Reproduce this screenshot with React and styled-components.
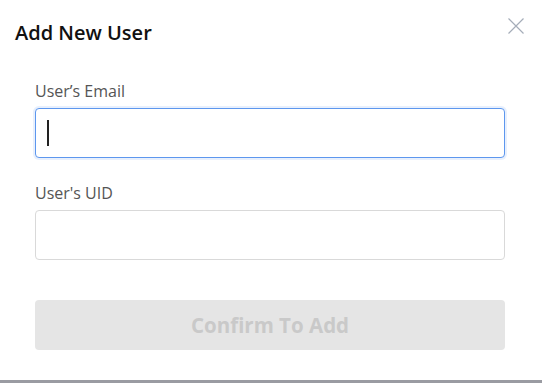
import React from 'react'
import styled, { createGlobalStyle } from 'styled-components'

const GlobalStyle = createGlobalStyle`
  html, body {
    margin: 0;
    padding: 0;
    background: #9a9ba2;
  }
  * {
    box-sizing: border-box;
  }
`

const Modal = styled.div`
  width: 542px;
  height: 380px;
  background: #ffffff;
  font-family: "Open Sans", "Liberation Sans", sans-serif;
`

const Header = styled.div`
  display: flex;
  justify-content: space-between;
  align-items: flex-start;
  padding: 19px 18px 0 15px;
`

const Title = styled.h2`
  margin: 0;
  font-size: 20px;
  line-height: 27px;
  font-weight: 600;
  color: #111;
`

const CloseButton = styled.button`
  width: 16px;
  height: 16px;
  padding: 0;
  margin-top: -1px;
  border: none;
  background: none;
  display: flex;
  cursor: pointer;
`

const Form = styled.form`
  display: flex;
  flex-direction: column;
  padding: 34px 37px 0 35px;
`

const Label = styled.label`
  display: block;
  margin-top: ${p => p.$first ? '0' : '24px'};
  margin-bottom: 6px;
  font-size: 16px;
  line-height: 22px;
  color: #555;
`

const InputWrap = styled.div`
  position: relative;
`

const Input = styled.input`
  display: block;
  width: 100%;
  height: 50px;
  padding: 0 12px;
  border-radius: 4px;
  font-family: inherit;
  font-size: 18px;
  outline: none;
  background: #fff;
  border: 1px solid ${p => p.$focused ? '#5d97ee' : '#d9d9d9'};
  box-shadow: ${p => p.$focused ? '0 0 0 2px rgba(93, 151, 238, 0.14)' : 'none'};
`

const Caret = styled.span`
  position: absolute;
  left: 12px;
  top: 12px;
  width: 2px;
  height: 26px;
  background: #222;
`

const SubmitButton = styled.button`
  margin-top: 40px;
  height: 50px;
  width: 100%;
  border: none;
  border-radius: 4px;
  background: #e5e5e5;
  color: #c9c9c9;
  font-family: inherit;
  font-size: 20.5px;
  font-weight: 700;
`

function CloseIcon() {
  return (
    <svg width="16" height="16" viewBox="0 0 16 16">
      <path d="M0.5 0.5 L15.5 15.5 M15.5 0.5 L0.5 15.5" stroke="#a5adb9" strokeWidth="1.2" fill="none" />
    </svg>
  )
}

function App() {
  return (
    <>
      <GlobalStyle />
      <Modal>
        <Header>
          <Title>Add New User</Title>
          <CloseButton type="button" aria-label="Close">
            <CloseIcon />
          </CloseButton>
        </Header>
        <Form onSubmit={e => e.preventDefault()}>
          <Label $first htmlFor="email">User’s Email</Label>
          <InputWrap>
            <Input id="email" $focused />
            <Caret />
          </InputWrap>
          <Label htmlFor="uid">User's UID</Label>
          <Input id="uid" />
          <SubmitButton type="submit" disabled>Confirm To Add</SubmitButton>
        </Form>
      </Modal>
    </>
  )
}

export default App
